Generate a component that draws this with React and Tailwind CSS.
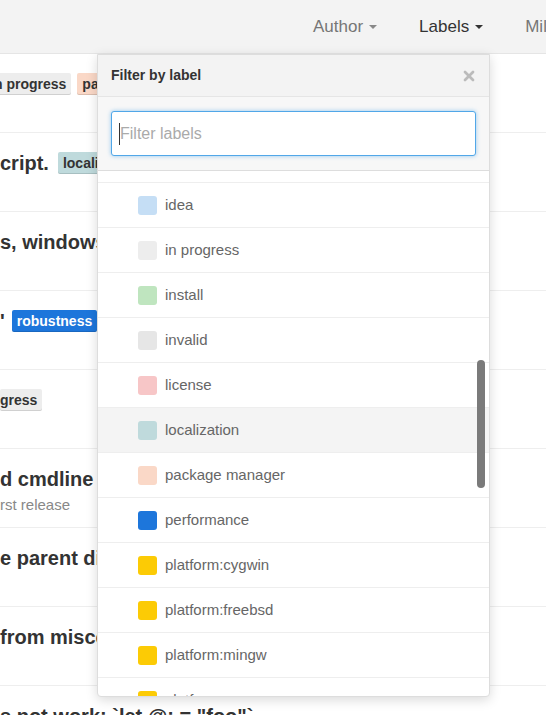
import { X } from 'lucide-react';

const LABELS = [
  { name: 'idea', color: 'bg-[#c5def5]' },
  { name: 'in progress', color: 'bg-[#ededed]' },
  { name: 'install', color: 'bg-[#bfe5bf]' },
  { name: 'invalid', color: 'bg-[#e6e6e6]' },
  { name: 'license', color: 'bg-[#f7c6c7]' },
  { name: 'localization', color: 'bg-[#bfdadc]', active: true },
  { name: 'package manager', color: 'bg-[#fad8c7]' },
  { name: 'performance', color: 'bg-[#1d76db]' },
  { name: 'platform:cygwin', color: 'bg-[#fccb05]' },
  { name: 'platform:freebsd', color: 'bg-[#fccb05]' },
  { name: 'platform:mingw', color: 'bg-[#fccb05]' },
  { name: 'platform:osx', color: 'bg-[#fccb05]' },
];

function Caret({ dark }) {
  return (
    <span className={`ml-1.5 inline-block w-0 h-0 border-x-[4px] border-x-transparent border-t-[4px] ${dark ? 'border-t-[#333]' : 'border-t-[#888]'}`} />
  );
}

function Tag({ children, className }) {
  return (
    <span className={`inline-flex items-center h-[22px] px-[5px] rounded-[2px] text-[14px] font-bold shadow-[inset_0_-1px_0_rgba(0,0,0,0.12)] ${className}`}>
      {children}
    </span>
  );
}

function IssueRow({ children, sub }) {
  return (
    <div className="h-[79px] border-b border-[#eee] pt-[19px] overflow-hidden whitespace-nowrap">
      <div className="flex items-center gap-[6px] h-[22px]">{children}</div>
      {sub && <div className="mt-[4px] text-[15px] text-[#888]">{sub}</div>}
    </div>
  );
}

const titleCls = 'text-[20px] font-bold text-[#333]';

export default function App() {
  return (
    <div className="relative w-[546px] h-[715px] overflow-hidden bg-white font-['Liberation_Sans',Arial,sans-serif]">
      {/* top filter bar */}
      <div className="h-[54px] bg-[#f3f3f3] border-b border-[#e5e5e5] flex items-center pl-[313px] text-[17px] whitespace-nowrap">
        <span className="flex items-center text-[#767676]">Author<Caret /></span>
        <span className="flex items-center text-[#333] ml-[42px]">Labels<Caret dark /></span>
        <span className="text-[#767676] ml-[42px]">Milestones</span>
      </div>

      {/* issue list behind */}
      <div>
        <IssueRow>
          <Tag className="bg-[#ededed] text-[#333] -ml-[6px] pl-0">n progress</Tag>
          <Tag className="bg-[#fad8c7] text-[#333]">package manager</Tag>
        </IssueRow>
        <IssueRow>
          <span className={titleCls}>cript.</span>
          <Tag className="bg-[#bfdadc] text-[#333] ml-[3px]">localization</Tag>
        </IssueRow>
        <IssueRow>
          <span className={titleCls}>s, windows</span>
        </IssueRow>
        <IssueRow>
          <span className={titleCls}>'</span>
          <Tag className="bg-[#1d76db] text-white ml-[1px]">robustness</Tag>
        </IssueRow>
        <IssueRow>
          <Tag className="bg-[#ededed] text-[#333] pl-0">gress</Tag>
        </IssueRow>
        <IssueRow sub="rst release">
          <span className={titleCls}>d cmdline</span>
        </IssueRow>
        <IssueRow>
          <span className={titleCls}>e parent directory</span>
        </IssueRow>
        <IssueRow>
          <span className={titleCls}>from miscellaneous</span>
        </IssueRow>
        <IssueRow>
          <span className={titleCls}>s not work: `let @; = "foo"`</span>
        </IssueRow>
      </div>

      {/* label dropdown */}
      <div className="absolute left-[97px] top-[54px] w-[393px] h-[643px] bg-white border border-[#ddd] rounded-b-[4px] shadow-[0_3px_12px_rgba(0,0,0,0.15)] overflow-hidden flex flex-col">
        <div className="h-[42px] shrink-0 bg-[#f3f3f3] border-b border-[#e5e5e5] flex items-center justify-between pl-[13px] pr-[12px]">
          <span className="text-[14px] font-bold text-[#333]">Filter by label</span>
          <X className="w-[16px] h-[16px] text-[#bbb]" strokeWidth={4} />
        </div>
        <div className="h-[74px] shrink-0 bg-[#f7f7f7] border-b border-[#ddd] px-[13px] pt-[14px]">
          <div className="h-[45px] bg-white border border-[#51a7e8] rounded-[3px] shadow-[0_0_4px_rgba(81,167,232,0.6)] flex items-center pl-[7px]">
            <span className="w-px h-[22px] bg-[#333]" />
            <span className="text-[16px] text-[#aaa]">Filter labels</span>
          </div>
        </div>
        <div className="relative flex-1 overflow-hidden">
          <div className="h-[12px] border-b border-[#eee]" />
          {LABELS.map(l => (
            <div
              key={l.name}
              className={`h-[45px] border-b border-[#eee] flex items-center pl-[40px] ${l.active ? 'bg-[#f4f4f4]' : ''}`}
            >
              <span className={`w-[19px] h-[19px] rounded-[3px] ${l.color}`} />
              <span className="ml-[8px] text-[15px] text-[#666]">{l.name}</span>
            </div>
          ))}
          <div className="absolute right-[4px] top-[189px] w-[8px] h-[128px] rounded-full bg-[#7a7a7a]" />
        </div>
      </div>
    </div>
  );
}
